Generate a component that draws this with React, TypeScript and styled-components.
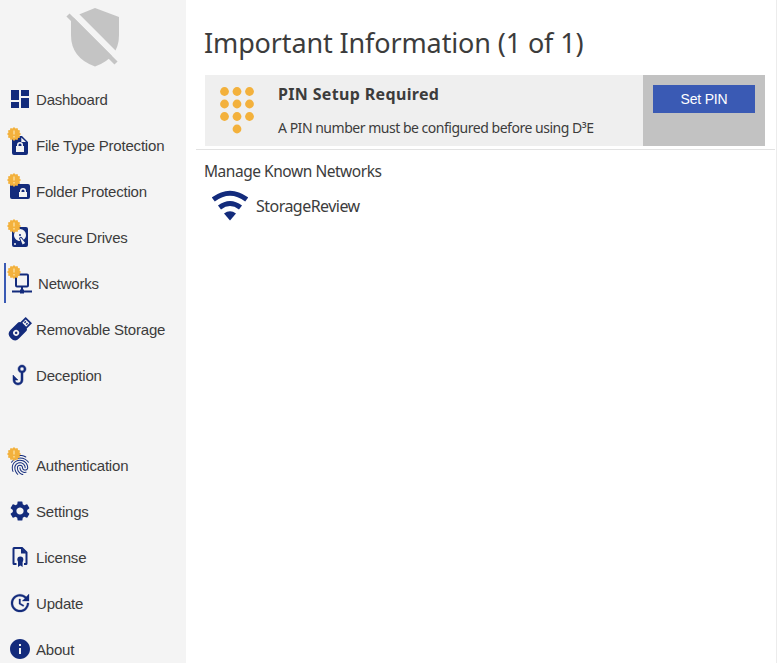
import React from "react";
import styled, { createGlobalStyle } from "styled-components";
import { MdDashboard, MdFingerprint, MdInfo, MdSettings } from "react-icons/md";

const NAVY = "#132b7c";
const AMBER = "#f3b13c";

const GlobalStyle = createGlobalStyle`
  * { box-sizing: border-box; }
  body { margin: 0; background: #fff; overflow: hidden; }
`;

const Window = styled.div`
  display: flex;
  width: 777px;
  height: 663px;
  overflow: hidden;
  color: #3c3c3c;
  font-family: "Noto Sans", Tahoma, sans-serif;
`;

const Sidebar = styled.nav`
  flex: none;
  width: 186px;
  background: #f4f4f4;
  font-family: "Liberation Sans", Arial, sans-serif;
  overflow: hidden;
`;

const LogoArea = styled.div`
  height: 76px;
  padding: 7px 0 0 65px;
  svg { display: block; }
`;

const NavGroup = styled.div<{ $gap?: number }>`
  padding-top: ${(p) => p.$gap ?? 0}px;
`;

const NavItem = styled.div<{ $active?: boolean }>`
  display: flex;
  align-items: center;
  height: 40px;
  margin: 3px 0 6px 4px;
  padding-left: 4px;
  border-left: ${(p) => (p.$active ? "2px solid #3a5ab4" : "0 none")};
  font-size: 15px;
  line-height: 20px;
  white-space: nowrap;
`;

const IconSlot = styled.span`
  position: relative;
  flex: none;
  width: 24px;
  height: 24px;
  margin-right: 4px;
  color: ${NAVY};
  svg { display: block; }
`;

const BadgeSlot = styled.span<{ $shift: number }>`
  position: absolute;
  left: ${(p) => -1 - p.$shift}px;
  top: -6px;
`;

const NavLabel = styled.span`
  padding-top: 1px;
  letter-spacing: -0.2px;
`;

const Main = styled.main`
  flex: 1;
  min-width: 0;
  border-right: 1px solid #ececec;
`;

const Title = styled.h1`
  margin: 24px 0 0 18px;
  height: 51px;
  font-size: 27px;
  font-weight: 400;
  line-height: 38px;
  letter-spacing: -0.13px;
  white-space: nowrap;
`;

const Notice = styled.section`
  display: flex;
  height: 71px;
  margin: 0 11px 0 19px;
  background: #efefef;
`;

const PinIcon = styled.div`
  width: 73px;
  padding: 11px 0 0 14px;
  svg { display: block; }
`;

const NoticeText = styled.div`
  flex: 1;
  white-space: nowrap;
`;

const NoticeTitle = styled.h2`
  margin: 7px 0 0;
  font-size: 16px;
  line-height: 24px;
  font-weight: 700;
  letter-spacing: 0.34px;
`;

const NoticeBody = styled.p`
  margin: 12px 0 0;
  font-size: 14px;
  line-height: 20px;
  letter-spacing: -0.48px;
`;

const Exponent = styled.span`
  display: inline-block;
  line-height: 14px;
  vertical-align: -1px;
`;

const NoticeAction = styled.div`
  width: 122px;
  padding: 10px 10px 0;
  background: #c2c2c2;
`;

const Button = styled.button`
  display: block;
  width: 102px;
  height: 28px;
  padding: 0;
  border: 0;
  color: #fff;
  background: #3a5ab4;
  font: 14px/28px "Liberation Sans", Arial, sans-serif;
  letter-spacing: -0.2px;
`;

const Divider = styled.div`
  height: 1px;
  margin: 3px 1px 0 10px;
  background: #e2e2e2;
`;

const SectionTitle = styled.h3`
  margin: 9px 0 0 18px;
  font-size: 15.5px;
  font-weight: 400;
  line-height: 24px;
  letter-spacing: -0.46px;
  white-space: nowrap;
`;

const NetworkRow = styled.div`
  display: flex;
  align-items: center;
  gap: 8px;
  height: 32px;
  margin: 7px 0 0 26px;
`;

const NetworkName = styled.span`
  font-size: 16px;
  line-height: 24px;
  letter-spacing: -0.53px;
`;

const Glyph = ({ d, weight = 0 }: { d: string; weight?: number }) => (
  <svg
    width="24"
    height="24"
    viewBox="0 0 24 24"
    fill="currentColor"
    fillRule="evenodd"
    stroke={weight ? "currentColor" : "none"}
    strokeWidth={weight}
  >
    <path d={d} />
  </svg>
);

const Shield = () => (
  <svg width="56" height="62" viewBox="65 7 56 62" fill="#c4c4c4">
    <path d="M79 14.500 95 8 119 17V35Q119 58 95 66.500Q71 58 71 35V19Z" />
    <path d="M66 5.500 126 65.500" stroke="#f4f4f4" strokeWidth="6.500" />
    <path d="M68 15 116 63" stroke="#c4c4c4" strokeWidth="4.500" />
  </svg>
);

const FileLock = () => (
  <Glyph d="M6 3H14L20 9V20Q20 22 18 22H6Q4 22 4 20V5Q4 3 6 3ZM13.300 4.500V9H18ZM8 13V19H16V13H15V12A3 3 0 0 0 9 12V13ZM10.500 13V12A1.500 1.500 0 0 1 13.500 12V13Z" />
);
const FolderLock = () => (
  <Glyph d="M4 4H10L12 5H20Q22 5 22 7V18Q22 20 20 20H4Q2 20 2 18V6Q2 4 4 4ZM11 13V18H19V13H18V12A3 3 0 0 0 12 12V13ZM13.500 13V12A1.500 1.500 0 0 1 16.500 12V13Z" />
);
const Drive = () => (
  <Glyph d="M6 2H18A2 2 0 0 1 20 4V20A2 2 0 0 1 18 22H6A2 2 0 0 1 4 20V4A2 2 0 0 1 6 2M12 4A6 6 0 0 0 6 10C6 13.310 8.690 16 12.100 16L11.220 13.770C10.950 13.290 11.110 12.680 11.590 12.400L12.450 11.900C12.930 11.630 13.540 11.790 13.820 12.270L15.740 14.690C17.120 13.590 18 11.900 18 10A6 6 0 0 0 12 4M12 9A1 1 0 0 1 13 10A1 1 0 0 1 11 10A1 1 0 0 1 12 9M7 18A1 1 0 0 0 7 20A1 1 0 0 0 7 18M12.090 13.270L14.580 19.580L17.170 18.080L12.950 12.770Z" />
);
const Network = () => (
  <Glyph d="M7 2.500H17Q19 2.500 19 4.500V14.500Q19 16.500 17 16.500H13V18.500H14V19.500H22V21.500H14V22.500H10V21.500H2V19.500H10V18.500H11V16.500H7Q5 16.500 5 14.500V4.500Q5 2.500 7 2.500ZM7 4.500V14.500H17V4.500Z" />
);
const Usb = () => (
  <svg width="24" height="24" viewBox="0 0 24 24" overflow="visible">
    <g transform="rotate(45 12 12)" fill="currentColor">
      <path d="M6 9Q6 7 8 7H16Q18 7 18 9V19.500Q18 25 12 25Q6 25 6 19.500Z" />
      <path d="M7.500 -.5H16.500V8H7.500Z" />
      <path d="M9.300 1.300H14.700V6H9.300Z" fill="#f4f4f4" />
      <path d="M10 2.500H11.500V4.500H10ZM12.500 2.500H14V4.500H12.500Z" />
      <circle cx="12" cy="17.500" r="3" fill="#f4f4f4" />
      <circle cx="12" cy="17.500" r="1.300" />
    </g>
  </svg>
);
const Hook = () => (
  <Glyph weight={0.5} d="M18 6C18 7.820 16.760 9.410 15 9.860V17A5 5 0 0 1 5 17V12L10 17H7A3 3 0 0 0 13 17V9.860C11.230 9.400 10 7.800 10 5.970C10 3.760 11.800 2 14 2C16.220 2 18 3.790 18 6M14 8A2 2 0 0 0 14 4A2 2 0 0 0 14 8Z" />
);
const License = () => (
  <svg width="24" height="24" viewBox="0 0 24 24" fill="currentColor">
    <path d="M8.500 19H6Q5.500 19 5.500 18.500V3.500Q5.500 3 6 3H14L18.500 7.500V18.500Q18.500 19 18 19H16" fill="none" stroke="currentColor" strokeWidth="2" />
    <path d="M13 3V8.500H18.500Z" />
    <circle cx="12.300" cy="14.500" r="3" />
    <path d="M10 15H14.600V22L12.300 20.500 10 22Z" />
  </svg>
);
const Update = () => (
  <Glyph weight={0.3} d="M21 10.120H14.220L16.960 7.300C14.230 4.600 9.810 4.500 7.080 7.200C4.350 9.910 4.350 14.280 7.080 17C9.810 19.700 14.230 19.700 16.960 17C18.320 15.650 19 14.080 19 12.100H21C21 14.080 20.120 16.650 18.360 18.390C14.850 21.870 9.150 21.870 5.640 18.390C2.140 14.920 2.110 9.280 5.620 5.810C9.130 2.340 14.760 2.340 18.270 5.810L21 3V10.120M12.500 8V12.250L16 14.330L15.280 15.540L11 13V8H12.500Z" />
);

const burst = Array.from({ length: 24 }, (_, i) => {
  const r = i % 2 ? 5.7 : 7;
  const a = (i * Math.PI) / 12;
  return `${(7 + r * Math.sin(a)).toFixed(2)},${(7 - r * Math.cos(a)).toFixed(2)}`;
}).join(" ");

const Badge = () => (
  <svg width="14" height="14" viewBox="0 0 14 14">
    <polygon points={burst} fill={AMBER} />
    <path d="M7 3.500V7.500M7 9V10.500" stroke="#fbdf9f" strokeWidth="1.400" />
  </svg>
);

const Keypad = () => (
  <svg width="36" height="48" viewBox="0 0 36 48" fill={AMBER}>
    {[5.5, 18, 30.5].flatMap((x) => [5.5, 18, 30.5].map((y) => <circle key={`${x}-${y}`} cx={x} cy={y} r="4.400" />))}
    <circle cx="18" cy="43" r="4.400" />
  </svg>
);

const Wifi = () => (
  <svg width="36" height="32" viewBox="0 0 36 32" fill="none" stroke={NAVY} strokeWidth="5">
    <path d="M1.300 9.500Q18-3 34.700 9.500" />
    <path d="M7.500 17.500Q18 9.500 28.500 17.500" />
    <path d="M12 23.500Q18 18.800 24 23.500L18 30.500Z" fill={NAVY} stroke="none" />
  </svg>
);

type Entry = { label: string; icon: React.ReactNode; alert?: boolean; active?: boolean };

const protection: Entry[] = [
  { label: "Dashboard", icon: <MdDashboard size={24} /> },
  { label: "File Type Protection", icon: <FileLock />, alert: true },
  { label: "Folder Protection", icon: <FolderLock />, alert: true },
  { label: "Secure Drives", icon: <Drive />, alert: true },
  { label: "Networks", icon: <Network />, alert: true, active: true },
  { label: "Removable Storage", icon: <Usb /> },
  { label: "Deception", icon: <Hook /> },
];

const system: Entry[] = [
  { label: "Authentication", icon: <MdFingerprint size={24} />, alert: true },
  { label: "Settings", icon: <MdSettings size={24} /> },
  { label: "License", icon: <License /> },
  { label: "Update", icon: <Update /> },
  { label: "About", icon: <MdInfo size={24} /> },
];

const renderEntry = ({ label, icon, alert, active }: Entry) => (
  <NavItem key={label} $active={active}>
    <IconSlot>
      {icon}
      {alert && (
        <BadgeSlot $shift={active ? 2 : 0}>
          <Badge />
        </BadgeSlot>
      )}
    </IconSlot>
    <NavLabel>{label}</NavLabel>
  </NavItem>
);

export default function App() {
  return (
    <Window>
      <GlobalStyle />
      <Sidebar>
        <LogoArea>
          <Shield />
        </LogoArea>
        <NavGroup>{protection.map(renderEntry)}</NavGroup>
        <NavGroup $gap={41}>{system.map(renderEntry)}</NavGroup>
      </Sidebar>
      <Main>
        <Title>Important Information (1 of 1)</Title>
        <Notice>
          <PinIcon>
            <Keypad />
          </PinIcon>
          <NoticeText>
            <NoticeTitle>PIN Setup Required</NoticeTitle>
            <NoticeBody>
              A PIN number must be configured before using D<Exponent>³</Exponent>E
            </NoticeBody>
          </NoticeText>
          <NoticeAction>
            <Button>Set PIN</Button>
          </NoticeAction>
        </Notice>
        <Divider />
        <SectionTitle>Manage Known Networks</SectionTitle>
        <NetworkRow>
          <Wifi />
          <NetworkName>StorageReview</NetworkName>
        </NetworkRow>
      </Main>
    </Window>
  );
}
